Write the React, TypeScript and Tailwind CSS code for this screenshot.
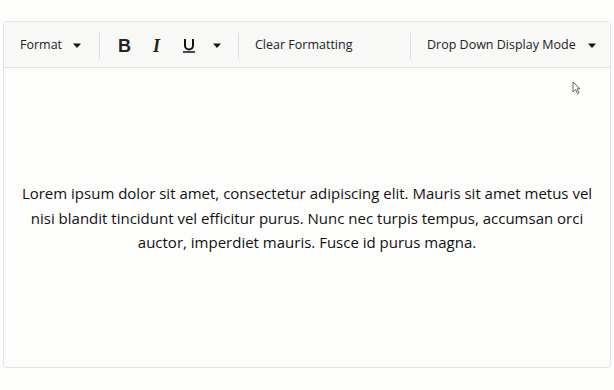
import React from "react";

const Caret = () => (
  <svg width="10" height="6" viewBox="0 0 10 6" className="shrink-0">
    <path d="M1 0.5h8L5 5z" fill="#111" />
  </svg>
);

const Sep = () => <div className="w-px h-[26px] bg-[#dcdcdc] shrink-0" />;

export default function App() {
  return (
    <div
      className="w-[614px] h-[390px] bg-[#fdfdfc] pt-[21px] px-[3px]"
      style={{ fontFamily: '"Open Sans", "Noto Sans", sans-serif' }}
    >
      <div className="h-[347px] border border-[#e3e3e3] rounded-[3px] flex flex-col bg-[#fdfdfc]">
        <div className="h-[46px] pt-[2px] flex items-center bg-[#f8f8f7] border-b border-[#e2e2e2] text-[12.5px] text-[#222]">
          <div className="flex items-center pl-[16px] w-[95px]">
            <span>Format</span>
            <span className="ml-[10px]"><Caret /></span>
          </div>
          <Sep />
          <div className="flex items-center pl-[18px] w-[138px]">
            <span className="font-bold text-[18px] leading-none" style={{ fontFamily: '"Liberation Sans", Arial, sans-serif' }}>B</span>
            <span className="ml-[22px] italic font-bold text-[18px] leading-none" style={{ fontFamily: '"Liberation Serif", serif' }}>I</span>
            <span className="ml-[22px] flex flex-col items-center w-[14px]">
              <svg width="12" height="15" viewBox="0 0 12 15">
                <path d="M2 1v6.5a4 4 0 0 0 8 0V1" fill="none" stroke="#111" strokeWidth="2" />
                <path d="M0 14h12" stroke="#111" strokeWidth="1.5" />
              </svg>
            </span>
            <span className="ml-[16px]"><Caret /></span>
          </div>
          <Sep />
          <div className="pl-[16px] w-[171px]">Clear Formatting</div>
          <Sep />
          <div className="flex items-center pl-[16px]">
            <span>Drop Down Display Mode</span>
            <span className="ml-[11px]"><Caret /></span>
          </div>
        </div>
        <div className="flex-1 relative flex items-center justify-center px-[12px] pt-[1px]">
          <p className="text-center text-[15px] leading-[24.5px] text-[#111]">
            Lorem ipsum dolor sit amet, consectetur adipiscing elit. Mauris sit amet metus vel nisi blandit tincidunt vel efficitur purus. Nunc nec turpis tempus, accumsan orci auctor, imperdiet mauris. Fusce id purus magna.
          </p>
          <svg width="10" height="14" viewBox="0 0 10 14" className="absolute left-[568px] top-[13px]">
            <path d="M1 1v10l2.5-2.5 2 4 1.5-.7-2-4H8z" fill="#fff" stroke="#444" strokeWidth="0.8" />
          </svg>
        </div>
      </div>
    </div>
  );
}
